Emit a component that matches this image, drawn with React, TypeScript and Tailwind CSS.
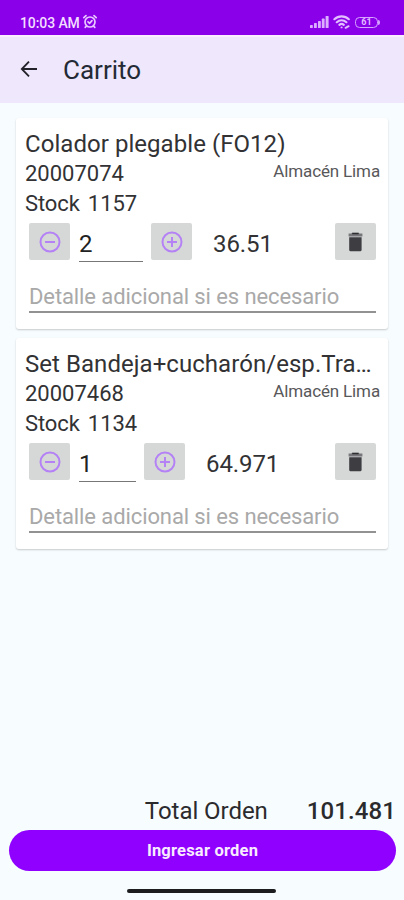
import React from 'react';

type Item = {
  name: string;
  code: string;
  stock: string;
  qty: string;
  amount: string;
  inputWidth: string;
};

const items: Item[] = [
  {
    name: 'Colador plegable (FO12)',
    code: '20007074',
    stock: '1157',
    qty: '2',
    amount: '36.51',
    inputWidth: 'w-[64px]',
  },
  {
    name: 'Set Bandeja+cucharón/esp.Tra…',
    code: '20007468',
    stock: '1134',
    qty: '1',
    amount: '64.971',
    inputWidth: 'w-[57px]',
  },
];

function AlarmIcon() {
  return (
    <svg width="16" height="16" viewBox="0 0 16 16" fill="none" stroke="#e9c8ff" strokeWidth="1.7" strokeLinecap="round">
      <circle cx="8" cy="8" r="5" />
      <path d="M1.8 3.6 4 1.6M14.2 3.6 12 1.6M4.2 12.2l-1 1.2M11.8 12.2l1 1.2M6 7.8l1.6 1.5 2.4-2.6" />
    </svg>
  );
}

function SignalIcon() {
  return (
    <svg width="19" height="12" viewBox="0 0 19 12" fill="#dcb0ff">
      <rect x="0" y="9" width="2.8" height="3" rx=".6" />
      <rect x="4" y="7" width="2.8" height="5" rx=".6" />
      <rect x="8" y="5" width="2.8" height="7" rx=".6" />
      <rect x="11.8" y="2.6" width="2.8" height="9.4" rx=".6" />
      <rect x="15.6" y="0" width="3" height="12" rx=".6" />
    </svg>
  );
}

function WifiIcon() {
  return (
    <svg width="18" height="14" viewBox="0 0 18 14" fill="none" stroke="#e2bdff" strokeWidth="2.2" strokeLinecap="round">
      <path d="M1.4 4.2C5.4.4 11.8.4 15.8 4.2M3.8 7.2c2.8-2.5 6.8-2.5 9.6 0M6.4 9.9c1.3-1.1 3.1-1.1 4.4 0" />
      <path d="M8.5 12.4h.2M12.6 12.8l3-1.6" strokeWidth="1.9" />
    </svg>
  );
}

function BatteryIcon() {
  return (
    <div className="flex items-center">
      <div className="flex h-[11px] w-[23px] items-center justify-center rounded-[4.5px] border-[1.5px] border-[#d6a3ff] text-[9px] leading-none font-bold text-[#e2bdff]">
        61
      </div>
      <div className="h-[5px] w-[2px] rounded-r-[2px] bg-[#d6a3ff]" />
    </div>
  );
}

function CircleIcon({ plus }: { plus?: boolean }) {
  return (
    <svg width="22" height="22" viewBox="0 0 22 22" fill="none" stroke="#b482f5" strokeWidth="2">
      <circle cx="11" cy="11" r="9.5" />
      <path d={plus ? 'M6 11h10M11 6v10' : 'M6 11h10'} />
    </svg>
  );
}

function TrashIcon() {
  return (
    <svg width="15" height="20" viewBox="0 0 15 20">
      <path d="M4.2.8h6.4l1 .6h2.8v3H.6v-3h2.6z" fill="#77777b" />
      <path d="M4.2.8h6.4v1.5H4.2z" fill="#2e2e32" />
      <path d="M1.2 5.2h12.4v12.9q0 1.1-1.1 1.1H2.3q-1.1 0-1.1-1.1z" fill="#3d3d42" />
    </svg>
  );
}

function Tile({ children, className = '' }: { children: React.ReactNode; className?: string }) {
  return (
    <button className={`flex h-[37px] w-[41px] shrink-0 items-center justify-center rounded-[2px] bg-[#d6d8d7] ${className}`}>
      {children}
    </button>
  );
}

function CartCard({ item }: { item: Item }) {
  return (
    <article className="h-[211px] rounded-[3px] bg-white pt-[11px] pr-[8px] pl-[9px] text-[#323234] shadow-[0_1px_2px_rgba(0,0,0,0.2)]">
      <h2 className="h-[30px] text-[24px] leading-[30px] tracking-[0.05px] whitespace-nowrap">{item.name}</h2>
      <div className="flex h-[30px] items-start justify-between">
        <span className="text-[22px] leading-[30px]">{item.code}</span>
        <span className="text-[17px] leading-[24px] tracking-[-0.14px] text-[#58585a]">Almacén Lima</span>
      </div>
      <div className="flex h-[34px] gap-[8px] text-[22px] leading-[29px]">
        <span className="tracking-[-0.1px]">Stock</span>
        <span>{item.stock}</span>
      </div>
      <div className="flex h-[39px] items-start pr-[4px] pl-[4px]">
        <Tile>
          <CircleIcon />
        </Tile>
        <div className={`ml-[9px] h-[39px] shrink-0 border-b border-[#777777] text-[24px] leading-[42px] text-[#222222] ${item.inputWidth}`}>
          {item.qty}
        </div>
        <Tile className="ml-[8px]">
          <CircleIcon plus />
        </Tile>
        <span className="ml-[21px] text-[24px] leading-[42px] tracking-[-0.1px]">{item.amount}</span>
        <Tile className="ml-auto">
          <TrashIcon />
        </Tile>
      </div>
      <div className="mr-[4px] ml-[4px] h-[51px] border-b-2 border-[#929292] pt-[20px] text-[22px] leading-[30px] tracking-[-0.1px] whitespace-nowrap text-[#a9a9a9]">
        Detalle adicional si es necesario
      </div>
    </article>
  );
}

export default function App() {
  return (
    <div className="flex h-[900px] w-[404px] flex-col overflow-hidden bg-[#f7fcff] font-[Roboto,sans-serif]">
      <div className="flex h-[35px] shrink-0 items-start bg-[#8a00e9] pt-[14px] pr-[24px] pl-[20px]">
        <span className="text-[14px] leading-[18px] font-medium text-[#f3deff] tracking-[-0.1px]">10:03 AM</span>
        <span className="ml-[2px]">
          <AlarmIcon />
        </span>
        <div className="ml-auto flex items-center gap-[4px] pt-[1px]">
          <SignalIcon />
          <WifiIcon />
          <BatteryIcon />
        </div>
      </div>
      <header className="flex h-[68px] shrink-0 items-center border-t-2 border-[#fbeeff] bg-[#efe7fb] pl-[20px]">
        <svg width="18" height="18" viewBox="0 0 18 18" fill="none" stroke="#232129" strokeWidth="1.8" className="-mt-[3px]">
          <path d="M17 9H2M9 1.6 1.8 9 9 16.4" />
        </svg>
        <h1 className="-mt-px ml-[25px] text-[26px] leading-[32px] text-[#232a35]">Carrito</h1>
      </header>
      <main className="flex flex-1 flex-col gap-[9px] pt-[15px] pr-[16px] pl-[16px]">
        {items.map((item) => (
          <CartCard key={item.code} item={item} />
        ))}
      </main>
      <footer className="shrink-0 pr-[8px] pl-[9px]">
        <div className="flex h-[34px] items-start justify-end text-[24px] leading-[30px] text-[#2b2b2d]">
          <span className="tracking-[-0.05px]">Total Orden</span>
          <span className="ml-[39px] font-medium tracking-[0.1px]">101.481</span>
        </div>
        <button className="flex h-[41px] w-full items-center justify-center rounded-full bg-[#9000ff] pt-[2px] text-[16.5px] font-bold tracking-[0.2px] text-[#f8eaff]">
          Ingresar orden
        </button>
        <div className="flex h-[29px] justify-center pt-[18px] pr-[2px]">
          <div className="h-[4px] w-[149px] rounded-full bg-[#1d1d1f]" />
        </div>
      </footer>
    </div>
  );
}
